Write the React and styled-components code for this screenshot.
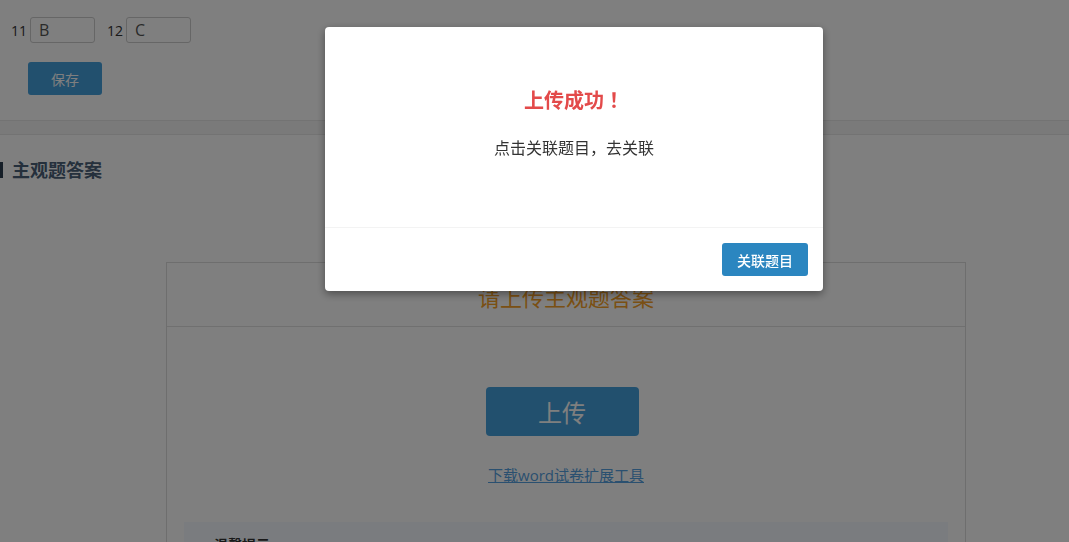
import React from 'react'
import styled, { createGlobalStyle } from 'styled-components'

const GlobalStyle = createGlobalStyle`
  html, body {
    margin: 0;
    padding: 0;
    background: #fff;
  }
  body {
    font-family: "Open Sans", "Noto Sans CJK SC", sans-serif;
    color: #333;
    font-size: 14px;
  }
`

const answers = [
  { no: 11, value: 'B' },
  { no: 12, value: 'C' },
]

const App = () => {
  return (
    <>
      <GlobalStyle />
      <Page>
        <Top>
          <AnswerRow>
            {answers.map(a => (
              <AnswerItem key={a.no}>
                <AnswerNo>{a.no}</AnswerNo>
                <AnswerInput defaultValue={a.value} />
              </AnswerItem>
            ))}
          </AnswerRow>
          <SaveButton>保存</SaveButton>
        </Top>

        <Band />

        <SectionTitle>主观题答案</SectionTitle>

        <Card>
          <CardHeader>请上传主观题答案</CardHeader>
          <CardBody>
            <UploadButton>上传</UploadButton>
            <ToolLink href="#">下载word试卷扩展工具</ToolLink>
            <Notice>
              <NoticeTitle>温馨提示</NoticeTitle>
            </Notice>
          </CardBody>
        </Card>
      </Page>

      <Overlay />
      <Modal>
        <ModalBody>
          <ModalTitle>上传成功！</ModalTitle>
          <ModalText>点击关联题目，去关联</ModalText>
        </ModalBody>
        <ModalFooter>
          <PrimaryButton>关联题目</PrimaryButton>
        </ModalFooter>
      </Modal>
    </>
  )
}

export default App

const Page = styled.div`
  height: 542px;
  overflow: hidden;
  background: #fff;
`

const Top = styled.div`
  padding: 17px 0 0 11px;
`

const AnswerRow = styled.div`
  display: flex;
  align-items: center;
  gap: 12px;
`

const AnswerItem = styled.div`
  display: flex;
  align-items: center;
  gap: 3px;
`

const AnswerNo = styled.span`
  font-size: 14px;
  color: #333;
`

const AnswerInput = styled.input`
  box-sizing: border-box;
  width: 65px;
  height: 26px;
  padding: 0 8px;
  border: 1px solid #ccc;
  border-radius: 3px;
  font-family: inherit;
  font-size: 16px;
  color: #555;
  outline: none;
`

const SaveButton = styled.button`
  display: block;
  margin: 19px 0 0 17px;
  width: 74px;
  height: 33px;
  border: none;
  border-radius: 3px;
  background: #45a0dc;
  color: #fff;
  font-family: inherit;
  font-size: 14px;
`

const Band = styled.div`
  margin-top: 25px;
  height: 13px;
  background: #f4f4f4;
  border-top: 1px solid #e6e6e6;
  border-bottom: 1px solid #e6e6e6;
`

const SectionTitle = styled.h3`
  margin: 27px 0 0;
  padding-left: 9px;
  border-left: 3px solid #2c3e50;
  font-size: 18px;
  line-height: 16px;
  font-weight: bold;
  color: #4a6078;
`

const Card = styled.div`
  margin: 84px 0 0 166px;
  width: 800px;
  box-sizing: border-box;
  border: 1px solid #ddd;
  border-bottom: none;
  height: 400px;
`

const CardHeader = styled.div`
  height: 64px;
  border-bottom: 1px solid #e0e0e0;
  display: flex;
  align-items: center;
  justify-content: center;
  padding-top: 3px;
  box-sizing: border-box;
  font-size: 22px;
  color: #f5a028;
`

const CardBody = styled.div`
  display: flex;
  flex-direction: column;
  align-items: center;
  padding-top: 60px;
`

const UploadButton = styled.button`
  width: 153px;
  height: 49px;
  margin-right: 8px;
  border: none;
  border-radius: 4px;
  background: #45a0dc;
  color: #fff;
  font-family: inherit;
  font-size: 24px;
`

const ToolLink = styled.a`
  margin-top: 28px;
  font-size: 15px;
  color: #55a0e0;
  text-decoration: underline;
`

const Notice = styled.div`
  align-self: stretch;
  margin: 37px 17px 0;
  height: 80px;
  background: #f4f9fe;
  padding: 12px 30px;
`

const NoticeTitle = styled.div`
  font-size: 14px;
  font-weight: bold;
  color: #333;
`

const Overlay = styled.div`
  position: fixed;
  inset: 0;
  background: rgba(0, 0, 0, 0.5);
`

const Modal = styled.div`
  position: fixed;
  top: 27px;
  left: 325px;
  width: 498px;
  background: #fff;
  border-radius: 4px;
  box-shadow: 0 3px 9px rgba(0, 0, 0, 0.4);
`

const ModalBody = styled.div`
  height: 200px;
  padding-top: 59px;
  box-sizing: border-box;
  text-align: center;
`

const ModalTitle = styled.div`
  font-family: "Noto Sans CJK TC", "Noto Sans CJK SC", sans-serif;
  font-size: 20px;
  line-height: 28px;
  font-weight: bold;
  color: #e34a4a;
`

const ModalText = styled.div`
  margin-top: 24px;
  font-size: 16px;
  line-height: 20px;
  color: #333;
`

const ModalFooter = styled.div`
  display: flex;
  justify-content: flex-end;
  padding: 15px;
  border-top: 1px solid #f3f3f3;
`

const PrimaryButton = styled.button`
  width: 86px;
  height: 33px;
  border: none;
  border-radius: 3px;
  background: #2b86c0;
  color: #fff;
  font-family: inherit;
  font-size: 14px;
  font-weight: 500;
`
